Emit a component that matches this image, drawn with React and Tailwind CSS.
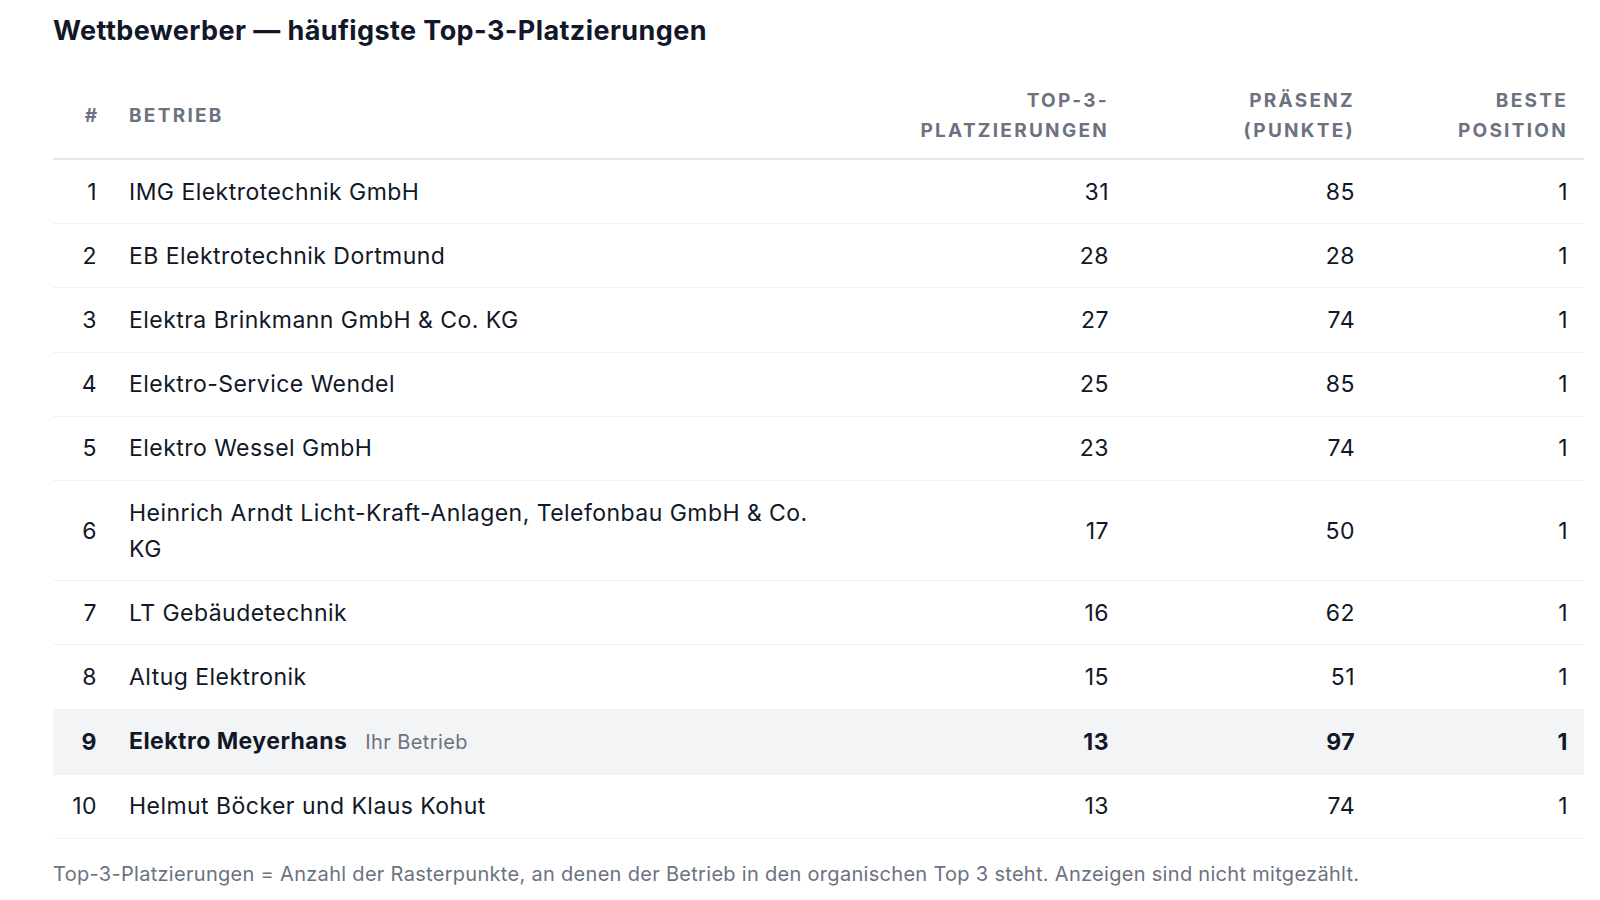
const rows = [
  { rank: 1, name: 'IMG Elektrotechnik GmbH', top3: 31, presence: 85, best: 1 },
  { rank: 2, name: 'EB Elektrotechnik Dortmund', top3: 28, presence: 28, best: 1 },
  { rank: 3, name: 'Elektra Brinkmann GmbH & Co. KG', top3: 27, presence: 74, best: 1 },
  { rank: 4, name: 'Elektro-Service Wendel', top3: 25, presence: 85, best: 1 },
  { rank: 5, name: 'Elektro Wessel GmbH', top3: 23, presence: 74, best: 1 },
  { rank: 6, name: 'Heinrich Arndt Licht-Kraft-Anlagen, Telefonbau GmbH & Co. KG', top3: 17, presence: 50, best: 1 },
  { rank: 7, name: 'LT Gebäudetechnik', top3: 16, presence: 62, best: 1 },
  { rank: 8, name: 'Altug Elektronik', top3: 15, presence: 51, best: 1 },
  { rank: 9, name: 'Elektro Meyerhans', top3: 13, presence: 97, best: 1, own: true },
  { rank: 10, name: 'Helmut Böcker und Klaus Kohut', top3: 13, presence: 74, best: 1 },
]

const thClass =
  'px-4 py-[12px] text-[19px] leading-[30px] font-bold uppercase tracking-[0.12em] text-[#6b7280] align-middle'

const tdClass = 'py-[13.6px] px-4 text-right align-middle'

export default function App() {
  return (
    <div className="min-h-screen bg-white pl-[53px] pr-[16px] pt-[15px] font-['Inter',sans-serif] text-[#111827]">
      <h2 className="text-[27px] leading-[32px] font-bold tracking-[0.015em]">
        Wettbewerber — häufigste Top-3-Platzierungen
      </h2>

      <table className="mt-[27px] w-full table-fixed border-collapse">
        <colgroup>
          <col className="w-[60px]" />
          <col className="w-[730px]" />
          <col className="w-[282px]" />
          <col className="w-[246px]" />
          <col className="w-[213px]" />
        </colgroup>
        <thead>
          <tr className="border-b-2 border-[#e5e7eb]">
            <th className={`${thClass} text-right pl-0 pr-[16px] tracking-normal`}>#</th>
            <th className={`${thClass} text-left pl-[16px]`}>Betrieb</th>
            <th className={`${thClass} text-right`}>
              Top-3-
              <br />
              Platzierungen
            </th>
            <th className={`${thClass} text-right`}>
              Präsenz
              <br />
              (Punkte)
            </th>
            <th className={`${thClass} text-right`}>
              Beste
              <br />
              Position
            </th>
          </tr>
        </thead>
        <tbody>
          {rows.map((r) => (
            <tr
              key={r.rank}
              className={`border-b border-[#f1f2f4] text-[23px] leading-[36px] tracking-[0.02em] ${
                r.own ? 'bg-[#f3f4f6] font-bold' : ''
              }`}
            >
              <td className="py-[13.6px] pr-[16px] text-right align-middle">{r.rank}</td>
              <td className="py-[13.6px] pl-[16px] pr-[16px] align-middle">
                {r.name}
                {r.own ? (
                  <span className="ml-[18px] text-[20px] font-normal tracking-[0.02em] text-[#6b7280]">
                    Ihr Betrieb
                  </span>
                ) : null}
              </td>
              <td className={tdClass}>{r.top3}</td>
              <td className={tdClass}>{r.presence}</td>
              <td className={tdClass}>{r.best}</td>
            </tr>
          ))}
        </tbody>
      </table>

      <p className="mt-[22px] text-[20px] leading-[26px] tracking-[0.015em] text-[#6b7280]">
        Top-3-Platzierungen = Anzahl der Rasterpunkte, an denen der Betrieb in den organischen Top 3 steht. Anzeigen sind nicht mitgezählt.
      </p>
    </div>
  )
}
